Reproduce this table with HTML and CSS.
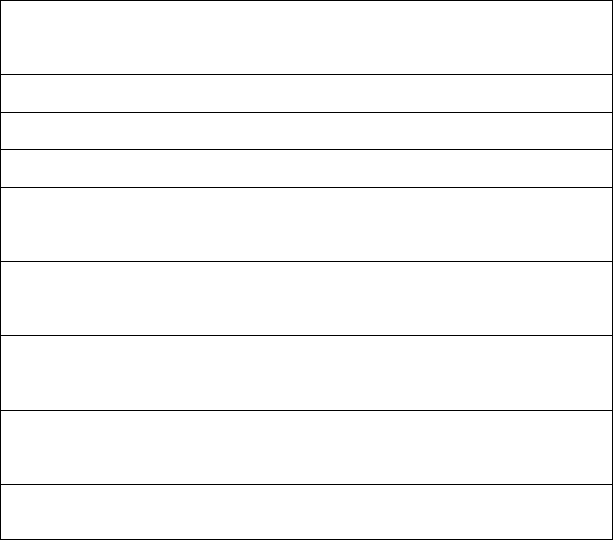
FILE: index.html
```html
<!DOCTYPE html>
<html>
<head>
<meta charset="utf-8">
<link rel="stylesheet" href="styles.css">
</head>
<body>
<table class="grid">
  <tr class="r74"><td></td></tr>
  <tr class="r38"><td></td></tr>
  <tr class="r37"><td></td></tr>
  <tr class="r38"><td></td></tr>
  <tr class="r74"><td></td></tr>
  <tr class="r74"><td></td></tr>
  <tr class="r75"><td></td></tr>
  <tr class="r74"><td></td></tr>
  <tr class="r55"><td></td></tr>
</table>
</body>
</html>
```
FILE: styles.css
```css
html, body {
  margin: 0;
  padding: 0;
  background: #fff;
  font-family: "Liberation Sans", Arial, sans-serif;
}
.grid {
  width: 613px;
  border-collapse: collapse;
  table-layout: fixed;
}
.grid td {
  border: 1px solid #000;
  padding: 0;
}
.r74 td { height: 73px; }
.r75 td { height: 74px; }
.r38 td { height: 37px; }
.r37 td { height: 36px; }
.r55 td { height: 54px; }
```
